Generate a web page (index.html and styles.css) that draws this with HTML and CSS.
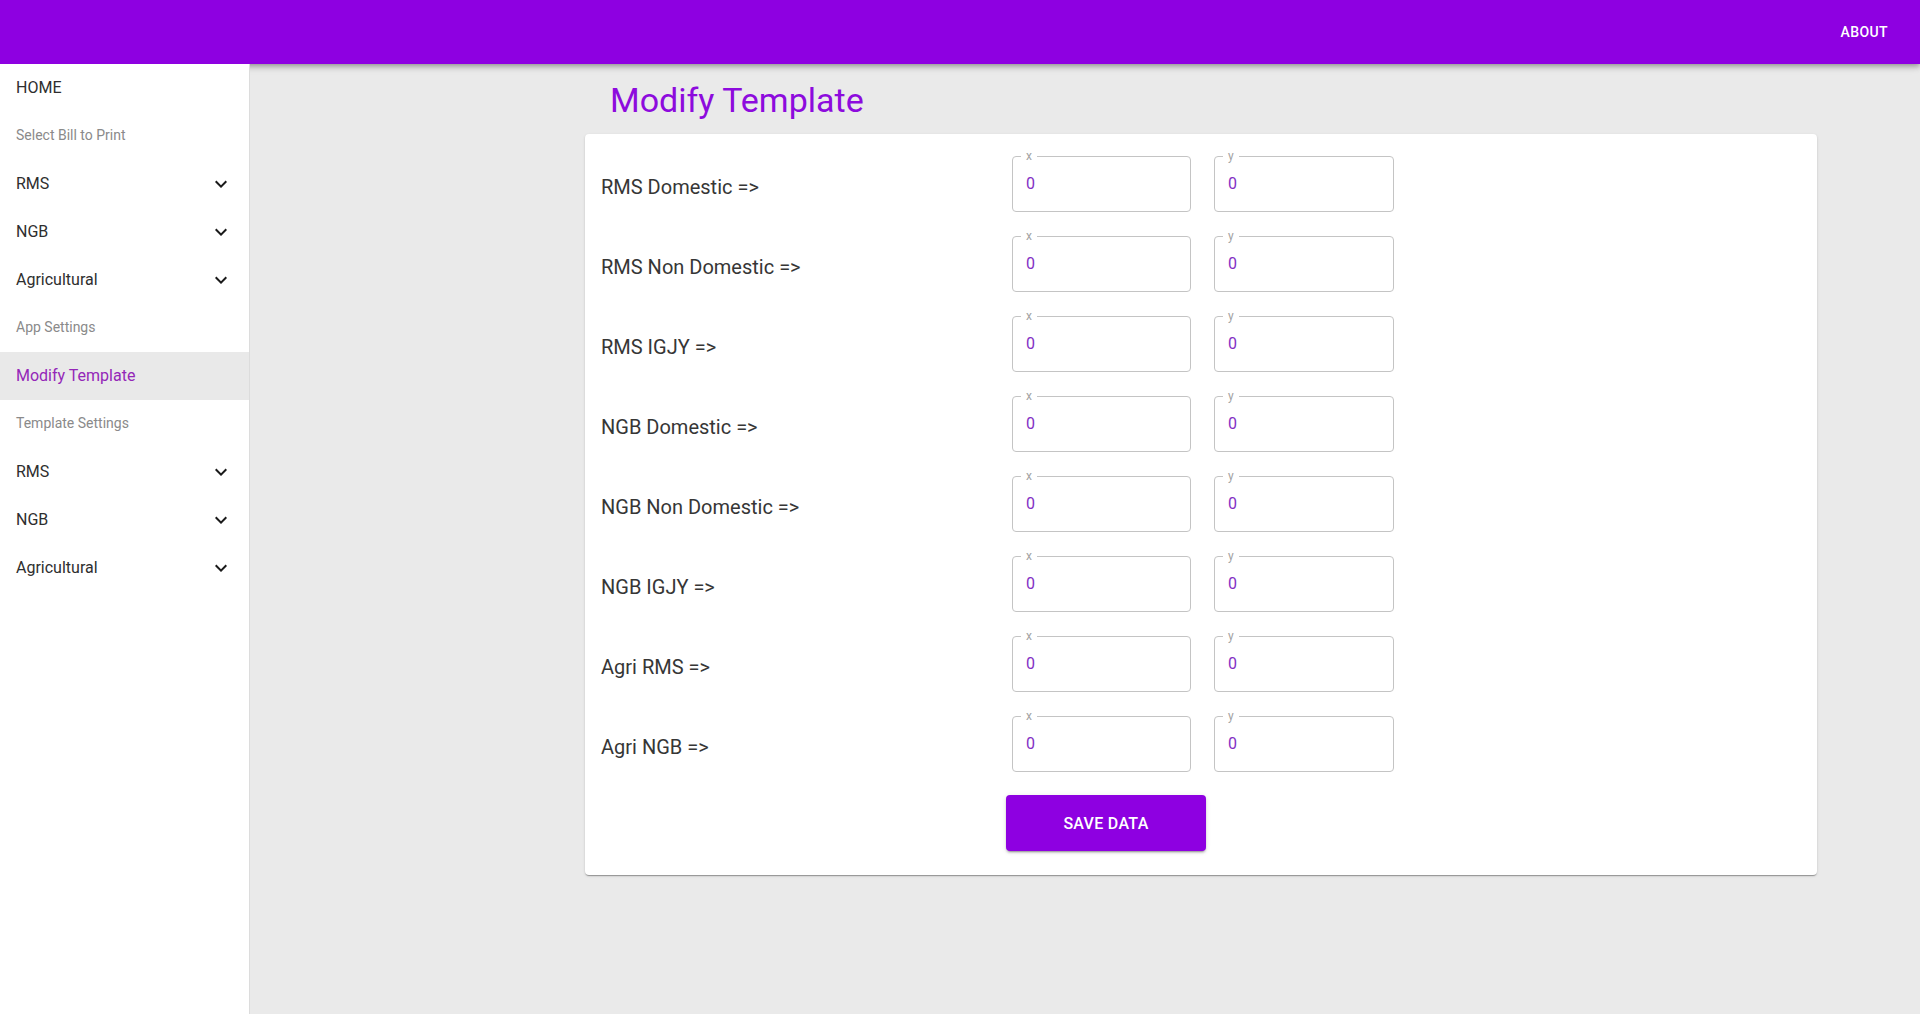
FILE: index.html
```html
<!DOCTYPE html>
<html lang="en">
<head>
<meta charset="utf-8">
<title>Modify Template</title>
<link rel="stylesheet" href="styles.css">
</head>
<body>
<div class="app">
  <header class="topbar">
    <button class="about">About</button>
  </header>
  <div class="layout">
    <nav class="sidebar">
      <div class="nav-item">HOME</div>
      <div class="nav-sub">Select Bill to Print</div>
      <div class="nav-item">RMS <svg class="chev" viewBox="0 0 24 24"><path d="M16.59 8.59L12 13.17 7.41 8.59 6 10l6 6 6-6z"/></svg></div>
      <div class="nav-item">NGB <svg class="chev" viewBox="0 0 24 24"><path d="M16.59 8.59L12 13.17 7.41 8.59 6 10l6 6 6-6z"/></svg></div>
      <div class="nav-item">Agricultural <svg class="chev" viewBox="0 0 24 24"><path d="M16.59 8.59L12 13.17 7.41 8.59 6 10l6 6 6-6z"/></svg></div>
      <div class="nav-sub">App Settings</div>
      <div class="nav-item active">Modify Template</div>
      <div class="nav-sub">Template Settings</div>
      <div class="nav-item">RMS <svg class="chev" viewBox="0 0 24 24"><path d="M16.59 8.59L12 13.17 7.41 8.59 6 10l6 6 6-6z"/></svg></div>
      <div class="nav-item">NGB <svg class="chev" viewBox="0 0 24 24"><path d="M16.59 8.59L12 13.17 7.41 8.59 6 10l6 6 6-6z"/></svg></div>
      <div class="nav-item">Agricultural <svg class="chev" viewBox="0 0 24 24"><path d="M16.59 8.59L12 13.17 7.41 8.59 6 10l6 6 6-6z"/></svg></div>
    </nav>
    <main class="main">
      <div class="container">
        <h1 class="title">Modify Template</h1>
        <section class="card">
          <div class="rows">
            <div class="row">
              <div class="row-label">RMS Domestic =&gt;</div>
              <div class="field"><span class="field-label">x</span><input type="text" value="0"></div>
              <div class="field"><span class="field-label">y</span><input type="text" value="0"></div>
            </div>
            <div class="row">
              <div class="row-label">RMS Non Domestic =&gt;</div>
              <div class="field"><span class="field-label">x</span><input type="text" value="0"></div>
              <div class="field"><span class="field-label">y</span><input type="text" value="0"></div>
            </div>
            <div class="row">
              <div class="row-label">RMS IGJY =&gt;</div>
              <div class="field"><span class="field-label">x</span><input type="text" value="0"></div>
              <div class="field"><span class="field-label">y</span><input type="text" value="0"></div>
            </div>
            <div class="row">
              <div class="row-label">NGB Domestic =&gt;</div>
              <div class="field"><span class="field-label">x</span><input type="text" value="0"></div>
              <div class="field"><span class="field-label">y</span><input type="text" value="0"></div>
            </div>
            <div class="row">
              <div class="row-label">NGB Non Domestic =&gt;</div>
              <div class="field"><span class="field-label">x</span><input type="text" value="0"></div>
              <div class="field"><span class="field-label">y</span><input type="text" value="0"></div>
            </div>
            <div class="row">
              <div class="row-label">NGB IGJY =&gt;</div>
              <div class="field"><span class="field-label">x</span><input type="text" value="0"></div>
              <div class="field"><span class="field-label">y</span><input type="text" value="0"></div>
            </div>
            <div class="row">
              <div class="row-label">Agri RMS =&gt;</div>
              <div class="field"><span class="field-label">x</span><input type="text" value="0"></div>
              <div class="field"><span class="field-label">y</span><input type="text" value="0"></div>
            </div>
            <div class="row">
              <div class="row-label">Agri NGB =&gt;</div>
              <div class="field"><span class="field-label">x</span><input type="text" value="0"></div>
              <div class="field"><span class="field-label">y</span><input type="text" value="0"></div>
            </div>
          </div>
          <button class="save">Save Data</button>
        </section>
      </div>
    </main>
  </div>
</div>
</body>
</html>
```

FILE: styles.css
```css
* { box-sizing: border-box; }

html, body {
  margin: 0;
  height: 100%;
}

body {
  font-family: Roboto, "Liberation Sans", Arial, sans-serif;
  color: #333;
  background: #eaeaea;
  overflow: hidden;
}

.app {
  display: flex;
  flex-direction: column;
  height: 100vh;
}

.topbar {
  position: relative;
  z-index: 1;
  height: 64px;
  flex: 0 0 64px;
  background: #8e00e1;
  display: flex;
  align-items: center;
  justify-content: flex-end;
  padding: 0 24px;
  box-shadow: 0 2px 4px -1px rgba(0,0,0,0.2), 0 4px 5px 0 rgba(0,0,0,0.14), 0 1px 10px 0 rgba(0,0,0,0.12);
}

.about {
  background: transparent;
  border: 0;
  color: #fff;
  font-family: Roboto, "Liberation Sans", Arial, sans-serif;
  font-size: 14px;
  font-weight: 500;
  letter-spacing: 0.4px;
  text-transform: uppercase;
  padding: 6px 8px;
  line-height: 24px;
}

.layout {
  flex: 1;
  display: flex;
  min-height: 0;
}

.sidebar {
  position: relative;
  z-index: 2;
  width: 250px;
  flex: 0 0 250px;
  background: #fff;
  border-right: 1px solid #dcdcdc;
}

.nav-item,
.nav-sub {
  height: 48px;
  display: flex;
  align-items: center;
  justify-content: space-between;
  padding: 0 16px 2px;
}

.nav-item {
  font-size: 16px;
  color: #2e2e2e;
}

.nav-sub {
  font-size: 14px;
  color: #8a8a8a;
}

.nav-item.active {
  background: #e9e9e9;
  color: #9427b8;
}

.chev {
  width: 24px;
  height: 24px;
  margin-top: 2px;
  fill: #1a1a1a;
}

.main {
  flex: 1;
  background: #eaeaea;
}

.container {
  width: 1280px;
  margin-left: 311px;
  padding: 0 24px;
}

.title {
  margin: 15px 0 13px 25px;
  font-size: 34px;
  line-height: 42px;
  font-weight: 400;
  color: #8d0bdd;
}

.card {
  background: #fff;
  border-radius: 4px;
  box-shadow: 0 2px 1px -1px rgba(0,0,0,0.2), 0 1px 1px 0 rgba(0,0,0,0.14), 0 1px 3px 0 rgba(0,0,0,0.12);
  padding: 22px 16px 24px;
}

.rows {
  display: flex;
  flex-direction: column;
  gap: 24px;
}

.row {
  display: grid;
  grid-template-columns: 388px 179px 180px;
  column-gap: 23px;
  align-items: center;
}

.row-label {
  font-size: 20px;
  line-height: 32px;
  padding-top: 5px;
  color: #363636;
}

.field {
  position: relative;
  height: 56px;
  border: 1px solid #c4c4c4;
  border-radius: 4px;
}

.field-label {
  position: absolute;
  top: -8px;
  left: 8px;
  padding: 0 5px;
  background: #fff;
  font-size: 12px;
  line-height: 14px;
  color: #a3a3a3;
}

.field input {
  display: block;
  width: 100%;
  height: 52px;
  padding: 0 13px;
  border: 0;
  outline: none;
  background: transparent;
  font-family: Roboto, "Liberation Sans", Arial, sans-serif;
  font-size: 16px;
  color: #8330c4;
}

.save {
  display: block;
  margin: 23px 0 0 405px;
  width: 200px;
  height: 56px;
  border: 0;
  border-radius: 4px;
  background: #8e00e1;
  color: #fff;
  font-family: Roboto, "Liberation Sans", Arial, sans-serif;
  font-size: 16px;
  font-weight: 500;
  letter-spacing: 0.3px;
  text-transform: uppercase;
  box-shadow: 0 3px 1px -2px rgba(0,0,0,0.2), 0 2px 2px 0 rgba(0,0,0,0.14), 0 1px 5px 0 rgba(0,0,0,0.12);
}
```
